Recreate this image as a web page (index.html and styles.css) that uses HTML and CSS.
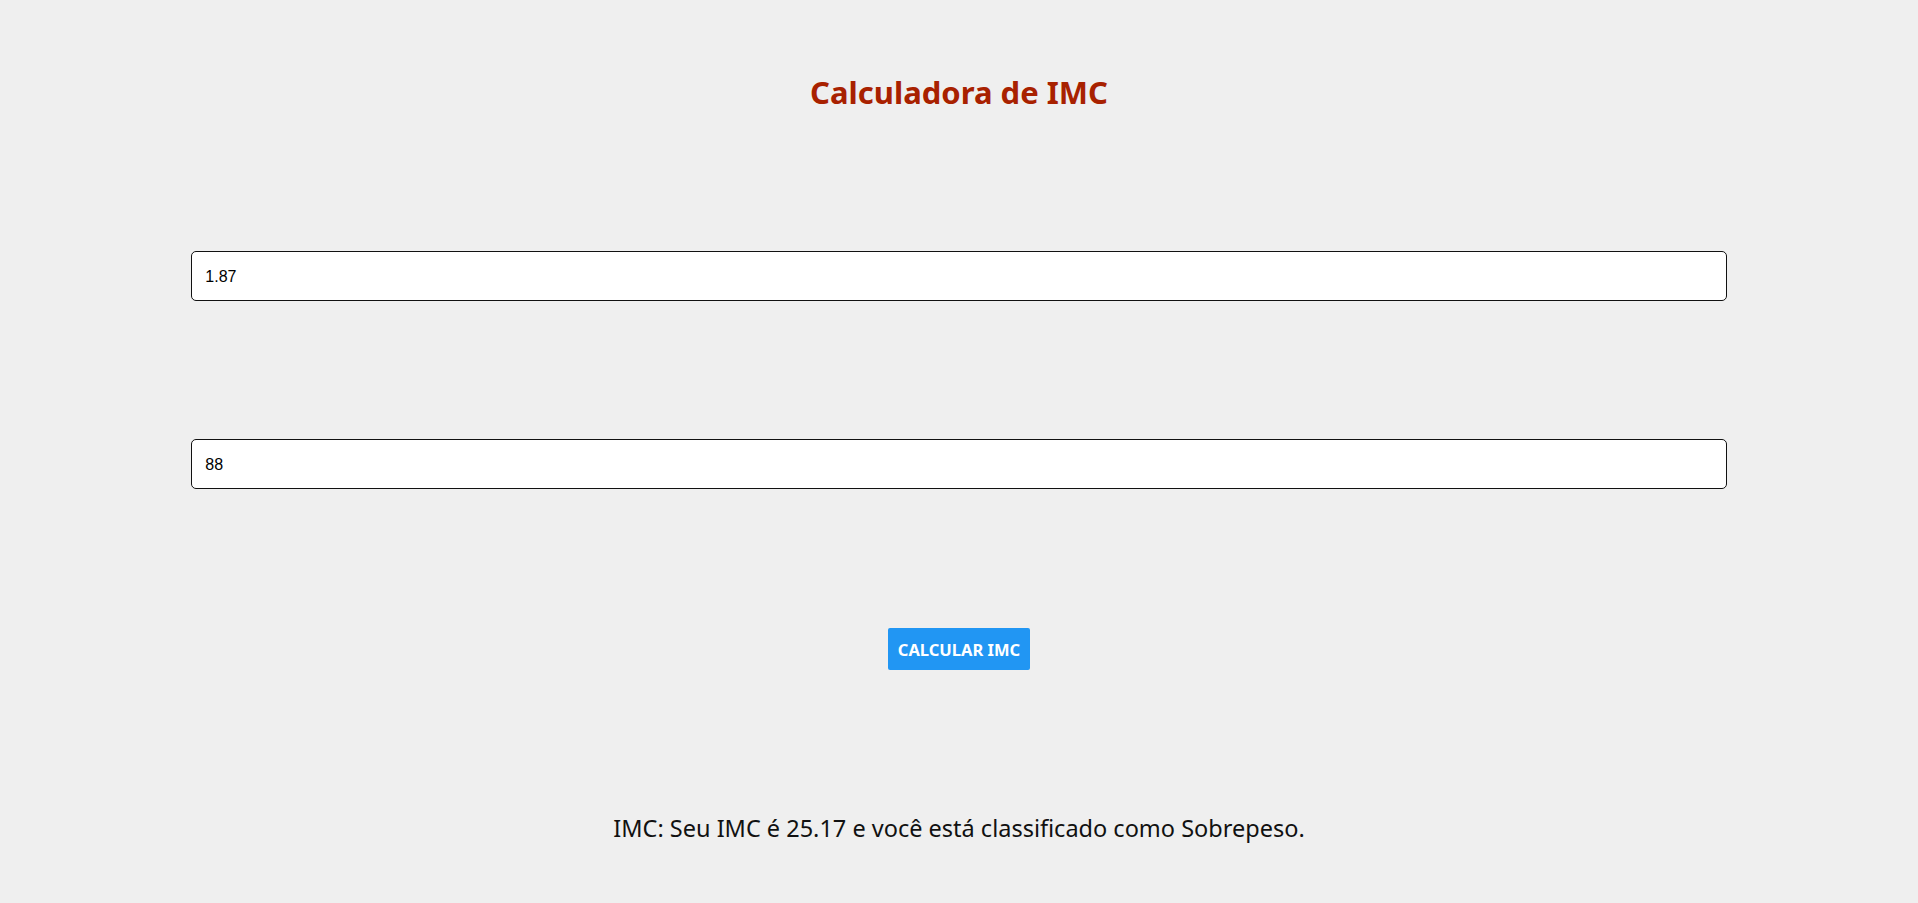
FILE: index.html
```html
<!DOCTYPE html>
<html lang="pt-BR">
<head>
<meta charset="utf-8">
<title>Calculadora de IMC</title>
<link rel="stylesheet" href="styles.css">
</head>
<body>
<main class="app">
  <h1 class="title">Calculadora de IMC</h1>
  <input class="field field-first" type="text" value="1.87">
  <input class="field field-second" type="text" value="88">
  <button class="btn" type="button">Calcular IMC</button>
  <p class="result">IMC: Seu IMC é 25.17 e você está classificado como Sobrepeso.</p>
</main>
</body>
</html>
```
FILE: styles.css
```css
html, body {
  margin: 0;
  padding: 0;
  background: #efefef;
}
body {
  font-family: "Noto Sans", "Open Sans", sans-serif;
  color: #111;
}
.app {
  display: flex;
  flex-direction: column;
  align-items: center;
  padding-top: 72px;
}
.title {
  margin: 0;
  font-size: 31px;
  line-height: 40px;
  font-weight: 700;
  color: #a82100;
}
.field {
  box-sizing: border-box;
  width: calc(80% + 1px);
  height: 50px;
  padding: 1px 13px 0 13px;
  border: 1px solid #111;
  border-radius: 5px;
  background: #fff;
  font-family: "Liberation Sans", Arial, sans-serif;
  font-size: 16px;
  color: #000;
  outline: none;
}
.field-first {
  margin-top: 139px;
}
.field-second {
  margin-top: 138px;
}
.btn {
  margin-top: 139px;
  width: 142px;
  height: 42px;
  padding: 0;
  border: none;
  border-radius: 2px;
  background: #2196f3;
  color: #fff;
  font-family: "Noto Sans", "Open Sans", sans-serif;
  font-weight: 700;
  font-size: 16.5px;
  text-transform: uppercase;
}
.result {
  margin: 143px 0 0;
  font-size: 23.5px;
  line-height: 30px;
  color: #111;
}
```
